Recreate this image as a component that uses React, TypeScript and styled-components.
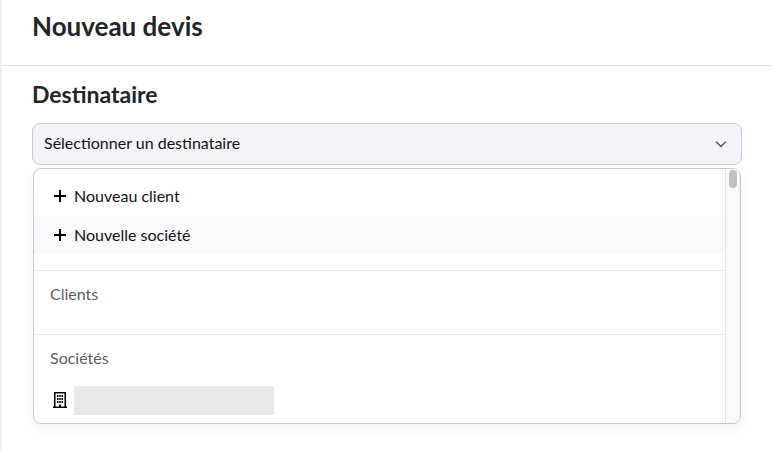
import React from "react";
import styled, { createGlobalStyle } from "styled-components";

const GlobalStyle = createGlobalStyle`
  *, *::before, *::after { box-sizing: border-box; }
  body {
    margin: 0;
    background: #ffffff;
    color: #212529;
    font-family: Lato, "Open Sans", sans-serif;
    font-size: 16px;
    line-height: 24px;
  }
`;

const Page = styled.main`
  min-height: 100vh;
  border-left: 2px solid #eeedf5;
`;

const Header = styled.header`
  padding: 9px 30px 22px;
  border-bottom: 1px solid #dedee2;
`;

const Title = styled.h1`
  margin: 0;
  font-size: 26px;
  line-height: 34px;
  font-weight: 700;
`;

const Section = styled.section`
  padding: 13px 30px 26px;
`;

const FieldLabel = styled.label`
  display: block;
  margin-bottom: 14px;
  font-size: 23px;
  line-height: 30px;
  font-weight: 700;
`;

const SelectBox = styled.div`
  display: grid;
  align-items: center;

  > * { grid-area: 1 / 1; }
`;

const Select = styled.select`
  appearance: none;
  width: 100%;
  height: 42px;
  padding: 0 40px 2px 11px;
  border: 1px solid #c9c9d1;
  border-radius: 8px;
  background: #f4f3f9;
  color: #111214;
  font: inherit;
`;

const Chevron = styled.svg`
  justify-self: end;
  margin-right: 15px;
  pointer-events: none;
`;

const Panel = styled.div`
  display: flex;
  margin: 3px 1px 0;
  border: 1px solid #c9c9d1;
  border-radius: 8px;
  overflow: hidden;
  background: #ffffff;
  box-shadow: 0 4px 12px rgba(0, 0, 0, 0.06);
`;

const Options = styled.div`
  flex: 1;
  min-width: 0;
`;

const Group = styled.div`
  display: flex;
  flex-direction: column;
  gap: 1px;
  padding: 8px 0 16px;

  & + & {
    padding: 11px 0 28px;
    border-top: 1px solid #ebebed;
  }

  & + &:last-child { padding-bottom: 4px; }
`;

const GroupName = styled.div`
  padding: 0 16px;
  color: #5c5d61;
`;

const Option = styled.button<{ $active?: boolean }>`
  display: flex;
  align-items: center;
  gap: 8px;
  width: 100%;
  height: 38px;
  padding: 0 20px;
  border: 0;
  background: ${(p) => (p.$active ? "#f8f9fb" : "transparent")};
  color: #111214;
  font: inherit;
  text-align: left;
`;

const CompanyOption = styled(Option)`
  gap: 7px;
  margin-top: 10px;
  padding: 0 19px;
`;

const Placeholder = styled.span`
  width: 200px;
  height: 29px;
  background: #e7e7e7;
`;

const ScrollTrack = styled.div`
  width: 15px;
  padding: 1px 3px;
  border-left: 1px solid #e4e4e6;
  border-right: 1px solid #ececee;
  background: #f9f9fa;
`;

const ScrollThumb = styled.div`
  width: 8px;
  height: 18px;
  border-radius: 4px;
  background: #c1c1c1;
`;

const PlusIcon = () => (
  <svg width="12" height="12" viewBox="0 0 12 12" aria-hidden="true">
    <path d="M6 0V12M0 6H12" stroke="#000" strokeWidth="2" />
  </svg>
);

const BuildingIcon = () => (
  <svg width="14" height="16" viewBox="0 0 14 16" aria-hidden="true">
    <path d="M1.75 15V.75H12.25V15M0 15.25H14" fill="none" stroke="#000" strokeWidth="1.5" />
    <path
      d="M4 3h1.5v2H4zM6.25 3h1.5v2h-1.5zM8.5 3H10v2H8.5zM4 6h1.5v2H4zM6.25 6h1.5v2h-1.5zM8.5 6H10v2H8.5zM4 9h1.5v2H4zM6.25 9h1.5v2h-1.5zM8.5 9H10v2H8.5zM6 12.5h2V15H6z"
      fill="#000"
    />
  </svg>
);

export default function App() {
  return (
    <>
      <GlobalStyle />
      <Page>
        <Header>
          <Title>Nouveau devis</Title>
        </Header>
        <Section>
          <FieldLabel htmlFor="recipient">Destinataire</FieldLabel>
          <SelectBox>
            <Select id="recipient" defaultValue="">
              <option value="">Sélectionner un destinataire</option>
            </Select>
            <Chevron width="12" height="8" viewBox="0 0 12 8" aria-hidden="true">
              <path
                d="M1.5 2L6 6.5L10.5 2"
                fill="none"
                stroke="#5c5d64"
                strokeWidth="1.5"
                strokeLinecap="round"
                strokeLinejoin="round"
              />
            </Chevron>
          </SelectBox>
          <Panel>
            <Options>
              <Group>
                <Option type="button">
                  <PlusIcon />
                  Nouveau client
                </Option>
                <Option type="button" $active>
                  <PlusIcon />
                  Nouvelle société
                </Option>
              </Group>
              <Group>
                <GroupName>Clients</GroupName>
              </Group>
              <Group>
                <GroupName>Sociétés</GroupName>
                <CompanyOption type="button" aria-label="Société">
                  <BuildingIcon />
                  <Placeholder />
                </CompanyOption>
              </Group>
            </Options>
            <ScrollTrack>
              <ScrollThumb />
            </ScrollTrack>
          </Panel>
        </Section>
      </Page>
    </>
  );
}
